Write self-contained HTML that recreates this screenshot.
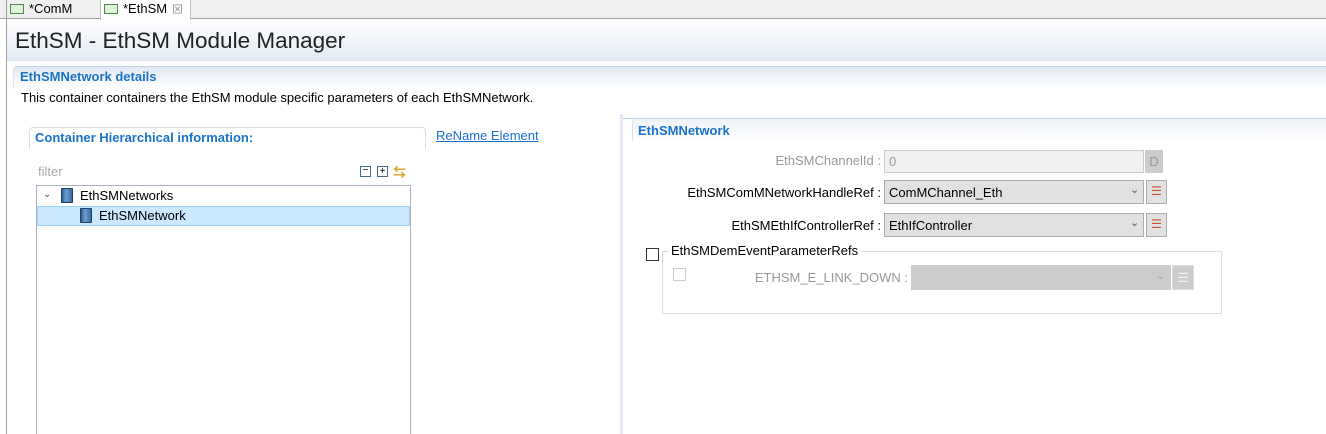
<!DOCTYPE html><html><head><style>
*{margin:0;padding:0;box-sizing:border-box}
html,body{width:1326px;height:434px;overflow:hidden}
body{background:#fff;font-family:"Liberation Sans","Noto Sans CJK SC",sans-serif;font-size:13px;color:#000;position:relative}
.a{position:absolute}
.lbl{position:absolute;text-align:right;white-space:nowrap;font-size:13px}
.combo{position:absolute;background:#e1e1e1;border:1px solid #adadad;font-size:13px;padding:4px 4px}
.btn{position:absolute;background:#e1e1e1;border:1px solid #adadad}
.ico{position:absolute;width:12px;height:15px;background:linear-gradient(90deg,#2d5b8f,#6d9ed2 40%,#3a6aa0);border:1px solid #1f3f66;border-radius:1px}
</style></head><body>
<div class="a" style="left:0;top:0;width:1326px;height:19px;background:#f0f0f0;border-bottom:1px solid #a0a0a0"></div>
<div class="a" style="left:6px;top:0;width:1px;height:434px;background:#a0a0a0"></div>
<div class="a" style="left:100px;top:0;width:91px;height:20px;background:#fff;border-left:1px solid #c0c0c0;border-right:1px solid #c0c0c0"></div>
<div class="a" style="left:10px;top:4px;width:14px;height:10px;border:1px solid #4a8a4a;background:#dff3d8"></div>
<div class="a" style="left:29px;top:1px;font-size:13px">*ComM</div>
<div class="a" style="left:104px;top:4px;width:14px;height:10px;border:1px solid #4a8a4a;background:#dff3d8"></div>
<div class="a" style="left:123px;top:1px;font-size:13px">*EthSM</div>
<div class="a" style="left:172px;top:1px;font-size:11px;color:#888">⊠</div>
<div class="a" style="left:7px;top:20px;width:1319px;height:40px;background:linear-gradient(#fff,#e3eaf4)"></div>
<div class="a" style="left:15px;top:28px;font-size:22.5px;color:#222">EthSM - EthSM Module Manager</div>
<div class="a" style="left:7px;top:60px;width:1319px;height:1px;background:#dde6f0"></div>
<div class="a" style="left:13px;top:66px;width:1313px;height:23px;border-top:1px solid #c0d2e4;border-left:1px solid #dde6f0;border-top-left-radius:4px;background:linear-gradient(#e3eaf4,#fff)"></div>
<div class="a" style="left:20px;top:69px;font-weight:bold;color:#1a73c9">EthSMNetwork details</div>
<div class="a" style="left:21px;top:90px;">This container containers the EthSM module specific parameters of each EthSMNetwork.</div>
<div class="a" style="left:622px;top:118px;width:704px;height:1px;background:#c0d2e4"></div>
<div class="a" style="left:620px;top:114px;width:3px;height:320px;background:#e2eaf3"></div>
<div class="a" style="left:29px;top:127px;width:397px;height:22px;border-top:1px solid #d8e0ea;border-left:1px solid #d8e0ea;border-right:1px solid #d8e0ea;border-radius:4px 4px 0 0"></div>
<div class="a" style="left:35px;top:130px;font-weight:bold;color:#1a73c9">Container Hierarchical information:</div>
<div class="a" style="left:436px;top:128px;color:#1a6fd0;text-decoration:underline">ReName Element</div>
<div class="a" style="left:38px;top:164px;color:#aaa">filter</div>
<div class="a" style="left:360px;top:166px;width:11px;height:11px;border:1px solid #4a6a8a;background:#fff;font-size:10px;line-height:8px;text-align:center">−</div>
<div class="a" style="left:377px;top:166px;width:11px;height:11px;border:1px solid #4a6a8a;background:#fff;font-size:10px;line-height:9px;text-align:center">+</div>
<div class="a" style="left:393px;top:162px;color:#d9a020;font-size:13px;font-weight:bold">⇆</div>
<div class="a" style="left:36px;top:185px;width:375px;height:260px;border:1px solid #a8b4c0"></div>
<div class="a" style="left:43px;top:189px;font-size:10px;color:#555">⌄</div>
<div class="ico" style="left:61px;top:188px"></div>
<div class="a" style="left:80px;top:188px">EthSMNetworks</div>
<div class="a" style="left:37px;top:206px;width:373px;height:20px;background:#cce8ff;border:1px solid #99d1ff"></div>
<div class="ico" style="left:80px;top:208px"></div>
<div class="a" style="left:99px;top:208px">EthSMNetwork</div>
<div class="a" style="left:632px;top:119px;width:694px;height:22px;border-left:1px solid #d8e0ea;border-top-left-radius:4px;background:linear-gradient(#eef2f8,#fff)"></div>
<div class="a" style="left:638px;top:123px;font-weight:bold;color:#1a73c9">EthSMNetwork</div>
<div class="lbl" style="right:445px;top:153px;color:#999">EthSMChannelId :</div>
<div class="combo" style="left:884px;top:150px;width:260px;height:23px;background:#f0f0f0;border-color:#ccc;color:#999;padding-top:3px">0</div>
<div class="btn" style="left:1145px;top:150px;width:18px;height:23px;background:#ccc;border-color:#ccc;color:#999;text-align:center;padding-top:3px">D</div>
<div class="lbl" style="right:445px;top:185px">EthSMComMNetworkHandleRef :</div>
<div class="combo" style="left:884px;top:180px;width:260px;height:24px">ComMChannel_Eth</div>
<div class="a" style="left:1130px;top:183px;font-size:11px;color:#555">⌄</div>
<div class="btn" style="left:1146px;top:180px;width:21px;height:24px;color:#c8502a;font-size:12px;text-align:center;padding-top:3px">☰</div>
<div class="lbl" style="right:445px;top:218px">EthSMEthIfControllerRef :</div>
<div class="combo" style="left:884px;top:213px;width:260px;height:24px">EthIfController</div>
<div class="a" style="left:1130px;top:216px;font-size:11px;color:#555">⌄</div>
<div class="btn" style="left:1146px;top:213px;width:21px;height:24px;color:#c8502a;font-size:12px;text-align:center;padding-top:3px">☰</div>
<div class="a" style="left:662px;top:251px;width:560px;height:63px;border:1px solid #ddd"></div>
<div class="a" style="left:646px;top:248px;width:13px;height:13px;border:1px solid #333;background:#fff"></div>
<div class="a" style="left:668px;top:243px;background:#fff;padding:0 3px">EthSMDemEventParameterRefs</div>
<div class="a" style="left:673px;top:268px;width:13px;height:13px;border:1px solid #ccc"></div>
<div class="lbl" style="right:418px;top:270px;color:#999">ETHSM_E_LINK_DOWN :</div>
<div class="a" style="left:911px;top:265px;width:260px;height:25px;background:#ccc;border:1px solid #ccc"></div>
<div class="a" style="left:1156px;top:269px;font-size:11px;color:#aaa">⌄</div>
<div class="a" style="left:1172px;top:265px;width:22px;height:25px;background:#ccc;border:1px solid #ddd;color:#eee;text-align:center;padding-top:4px">☰</div>
</body></html>
